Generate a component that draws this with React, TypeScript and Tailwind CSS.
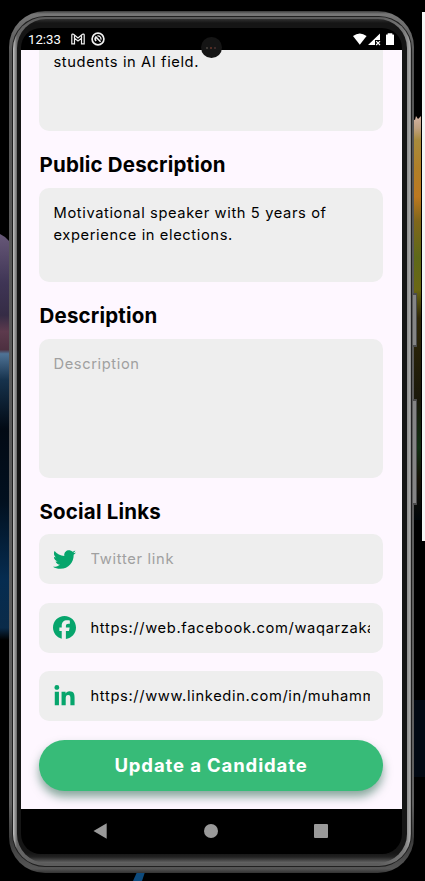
import React from "react";
import { FaTwitter, FaLinkedinIn } from "react-icons/fa";
import { FaFacebook } from "react-icons/fa6";

function Wallpaper() {
  return (
    <svg className="absolute inset-0" width="425" height="881" viewBox="0 0 425 881">
      <defs>
        <linearGradient id="left" x1="0" y1="0" x2="0" y2="1">
          <stop offset="0" stopColor="#675878" />
          <stop offset="0.12" stopColor="#3f3555" />
          <stop offset="0.2" stopColor="#352c45" />
          <stop offset="0.24" stopColor="#5d3a4d" />
          <stop offset="0.285" stopColor="#4d3040" />
          <stop offset="0.295" stopColor="#4f7396" />
          <stop offset="0.36" stopColor="#16324c" />
          <stop offset="0.48" stopColor="#020a14" />
          <stop offset="0.66" stopColor="#02101f" />
          <stop offset="0.85" stopColor="#062c50" />
          <stop offset="0.97" stopColor="#0a2b49" />
          <stop offset="1" stopColor="#000000" />
        </linearGradient>
        <linearGradient id="right" x1="0" y1="0" x2="0" y2="1">
          <stop offset="0" stopColor="#d3b3a4" />
          <stop offset="0.03" stopColor="#c0a080" />
          <stop offset="0.06" stopColor="#a88a3c" />
          <stop offset="0.13" stopColor="#b07f28" />
          <stop offset="0.2" stopColor="#bd7820" />
          <stop offset="0.26" stopColor="#80661b" />
          <stop offset="0.35" stopColor="#5e6919" />
          <stop offset="0.43" stopColor="#6b6713" />
          <stop offset="0.5" stopColor="#302708" />
          <stop offset="0.7" stopColor="#1b190b" />
          <stop offset="0.82" stopColor="#123014" />
          <stop offset="0.9" stopColor="#171307" />
          <stop offset="1" stopColor="#01070a" />
        </linearGradient>
      </defs>
      <path d="M0 234 L5 237 L12 244 V640 H0 Z" fill="url(#left)" />
      <path d="M412 119 L415 120 L416 116 L418 119 L421 116 V520 H412 Z" fill="url(#right)" />
      <path d="M414 700 H425 V777 H414 Z" fill="#020913" />
      <path d="M133 881 L137 872 H145 L142 881 Z" fill="#0d4a7c" />
      <rect x="422" y="12" width="3" height="529" fill="#f5f5f5" />
    </svg>
  );
}

function SideButton({ className }: { className: string }) {
  return (
    <div
      className={`absolute right-[-3px] w-[4px] rounded-[1px] border-y-2 border-r border-[#4c4c4c] bg-[#858585] ${className}`}
    />
  );
}

function StatusBar() {
  return (
    <div className="flex h-[22px] shrink-0 items-center pr-[8px] pl-[7px] text-white">
      <span className="w-[43px] pt-px font-[Roboto] text-[13.2px] leading-[22px]">12:33</span>
      <svg width="14" height="12" viewBox="0 0 14 12" fill="none" stroke="#f0f0f0" strokeWidth="1.2">
        <path d="M.8 10.8 V1.8 Q1.3 .6 2.5 1.3 L7 5 L11.5 1.3 Q12.7 .6 13.2 1.8 V10.8 H10.5 V5.2 L7 8 L3.5 5.2 V10.8 Z" />
        <path d="M3.5 5.2 V2.3 M10.5 5.2 V2.3" />
      </svg>
      <svg className="ml-[6px]" width="14" height="14" viewBox="0 0 14 14" fill="none" stroke="#f0f0f0">
        <circle cx="7" cy="7" r="5.9" strokeWidth="1.7" />
        <path d="M5.1 9 A3 3 0 0 1 4.9 5 L9.6 9.8" strokeWidth="1.6" />
        <path d="M6.4 3.9 A3.1 3.1 0 0 1 9.9 7.6" strokeWidth="1.3" />
      </svg>
      <svg className="ml-auto" width="41" height="13" viewBox="0 0 41 13" fill="white">
        <path d="M0 3 Q6.8 -2 13.6 3 L6.8 11.8 Z" />
        <path d="M15 12 L27 .5 V7 H22 V12 Z" />
        <path d="M23.2 8.2 L27 12 M27 8.2 L23.2 12" stroke="white" strokeWidth="1.2" />
        <path d="M33 2 Q33 1.5 33.5 1.5 H34.7 V.3 H39.3 V1.5 H40.5 Q41 1.5 41 2 V12 H33 Z" />
      </svg>
    </div>
  );
}

function Heading({ children }: { children: React.ReactNode }) {
  return (
    <h2 className="mt-[22px] pl-[0.5px] text-[20.5px] leading-6 font-bold tracking-[0.18px] text-black">{children}</h2>
  );
}

function LinkField({ icon, children, placeholder }: { icon: React.ReactNode; children: string; placeholder?: boolean }) {
  return (
    <div className="flex h-[50px] items-center rounded-[10px] bg-[#eeeeee] px-[13.5px] text-[14.7px]">
      <div className="flex w-6 justify-center text-[#06a56c]">{icon}</div>
      <div
        className={`mt-px ml-[14px] min-w-0 flex-1 overflow-hidden whitespace-nowrap ${
          placeholder ? "tracking-[0.7px] text-[#a0a0a0]" : "tracking-[0.65px] text-black"
        }`}
      >
        {children}
      </div>
    </div>
  );
}

export default function App() {
  return (
    <div className="relative h-[881px] w-[425px] overflow-hidden bg-black pt-[11px] pl-[9px] font-['Inter',sans-serif]">
      <Wallpaper />
      <div className="relative h-[862px] w-[405px] rounded-[36px] bg-[linear-gradient(#3c3c3c,#777_3px,#555_5%,#606060_92%,#3a3a3a_96%,#555_99.5%,#333)] pt-[5px] pr-[2px] pb-[6px] pl-[3px]">
        <SideButton className="top-[282px] h-[54px]" />
        <SideButton className="top-[388px] h-[106px]" />
        <div className="relative h-full rounded-[33px] bg-[#202020] p-px">
          <div className="h-full rounded-[32px] bg-[linear-gradient(90deg,#c4c4c4,#666_4px,#5c5c5c_30px,#5c5c5c_365px,#777_390px,#8c8c8c_394px,#aaa_397px,#777)] pt-[2px] pr-[4px] pb-[3px] pl-[4px]">
            <div className="h-full rounded-[29px] bg-[linear-gradient(#303030,#151515_4px,#151515_834px,#222_838px,#666)] pt-[9px] pr-[5px] pb-[9px] pl-[4px]">
              <div className="flex h-[826px] w-[381px] flex-col overflow-hidden rounded-[20px] bg-black">
                <StatusBar />
                <main className="h-[759px] shrink-0 overflow-hidden bg-[#fef7ff] pr-[19px] pl-[18px] text-[14.7px]">
                  <div className="h-[81px] rounded-b-[10px] bg-[#eeeeee] px-[14.5px] pt-px leading-[22.5px] tracking-[0.6px]">
                    students in AI field.
                  </div>
                  <Heading>Public Description</Heading>
                  <div className="mt-[11px] h-[94px] rounded-[10px] bg-[#eeeeee] px-[14.5px] pt-[14px] leading-[22.3px] tracking-[0.61px]">
                    Motivational speaker with 5 years of
                    <br />
                    experience in elections.
                  </div>
                  <Heading>Description</Heading>
                  <div className="mt-[11px] h-[139px] rounded-[10px] bg-[#eeeeee] px-[14.5px] pt-[14px] leading-[22.3px] tracking-[0.6px] text-[#a0a0a0]">
                    Description
                  </div>
                  <Heading>Social Links</Heading>
                  <div className="mt-[10px] flex flex-col gap-[18.5px]">
                    <LinkField icon={<FaTwitter size={23} />} placeholder>
                      Twitter link
                    </LinkField>
                    <LinkField icon={<FaFacebook size={23} />}>https://web.facebook.com/waqarzaka</LinkField>
                    <LinkField icon={<FaLinkedinIn size={23} />}>https://www.linkedin.com/in/muhammad</LinkField>
                  </div>
                  <button className="mt-[19px] flex h-[51px] w-full items-center justify-center rounded-full bg-[#37bb78] text-[18.5px] font-bold tracking-[0.88px] text-white shadow-[0_6px_10px_rgba(20,90,60,0.5)]">
                    Update a Candidate
                  </button>
                </main>
                <nav className="flex h-[44px] shrink-0 items-center justify-between pr-[74px] pl-[72px]">
                  <svg width="14" height="16" viewBox="0 0 14 16">
                    <path d="M.5 8 L13.7 .3 V15.7 Z" fill="#999" />
                  </svg>
                  <div className="size-[14px] rounded-full bg-[#999]" />
                  <div className="size-[14px] rounded-[1px] bg-[#999]" />
                </nav>
              </div>
            </div>
          </div>
        </div>
        <div className="absolute top-[26px] left-[191.5px] flex size-[21px] items-center justify-center gap-[2px] rounded-full bg-[#151515]">
          <div className="size-[2px] rounded-full bg-[#4a4540]" />
          <div className="size-[2px] rounded-full bg-[#6b3527]" />
          <div className="size-[2px] rounded-full bg-[#4a3030]" />
        </div>
      </div>
    </div>
  );
}
